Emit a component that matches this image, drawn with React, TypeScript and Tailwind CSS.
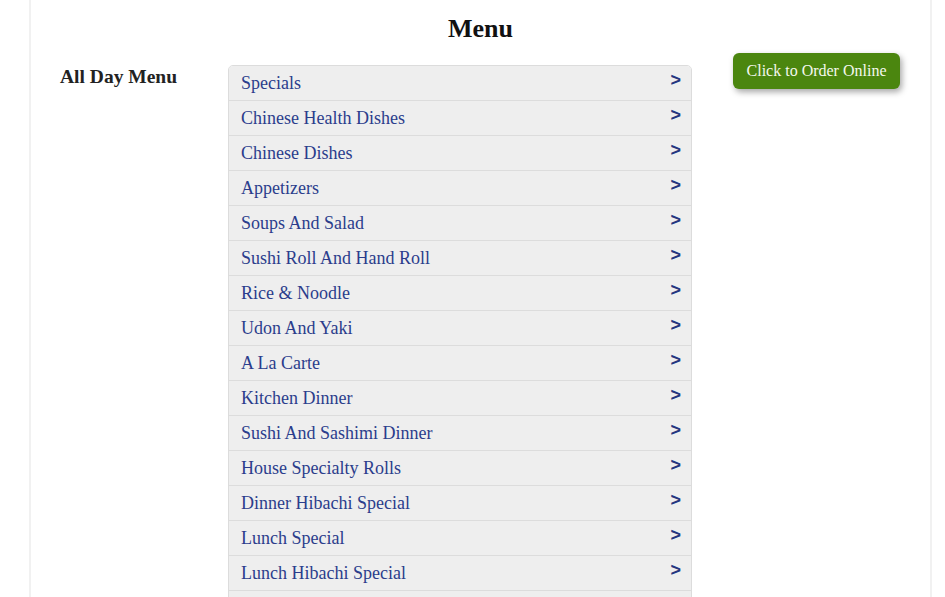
const CATEGORIES = [
  "Specials",
  "Chinese Health Dishes",
  "Chinese Dishes",
  "Appetizers",
  "Soups And Salad",
  "Sushi Roll And Hand Roll",
  "Rice & Noodle",
  "Udon And Yaki",
  "A La Carte",
  "Kitchen Dinner",
  "Sushi And Sashimi Dinner",
  "House Specialty Rolls",
  "Dinner Hibachi Special",
  "Lunch Special",
  "Lunch Hibachi Special",
  "Lunch Bento Box",
];

function CategoryRow({ name }: { name: string }) {
  return (
    <a
      href="#"
      className="flex h-[35px] items-center justify-between border-b border-[#dcdcdc] bg-[#eeeeee] pl-3 pr-[10px] text-[#2b3d8c] last:border-b-0"
    >
      <span className="text-[18px] leading-none">{name}</span>
      <span className="-mt-[6px] font-['Liberation_Sans',Arial,sans-serif] text-[18px] font-bold leading-none text-[#24357f]">
        &gt;
      </span>
    </a>
  );
}

export default function App() {
  return (
    <div className="min-h-screen bg-white font-['Liberation_Serif','Times_New_Roman',serif] text-[#222]">
      <div className="ml-[29px] mr-[13px] min-h-screen border-x-2 border-[#f1f1f1]">
        <h1 className="pt-[13px] text-center text-[26px] font-bold leading-[32px] text-[#111]">Menu</h1>
        <div className="mt-[20px] flex">
          <div className="w-[197px] shrink-0 pl-[29px] pt-[1px]">
            <h2 className="text-[19.5px] font-bold leading-[22px] text-[#222]">All Day Menu</h2>
          </div>
          <div className="w-[464px] shrink-0 overflow-hidden rounded-t-[5px] border border-[#dcdcdc]">
            {CATEGORIES.map((c) => (
              <CategoryRow key={c} name={c} />
            ))}
          </div>
          <div className="flex flex-1 justify-center pl-[11px]">
            <button className="-mt-[12px] h-[36px] w-[167px] rounded-[6px] bg-[#4b860f] text-[16px] text-[#f4f8ee] shadow-[2px_3px_6px_rgba(0,0,0,0.35)]">
              Click to Order Online
            </button>
          </div>
        </div>
      </div>
    </div>
  );
}
